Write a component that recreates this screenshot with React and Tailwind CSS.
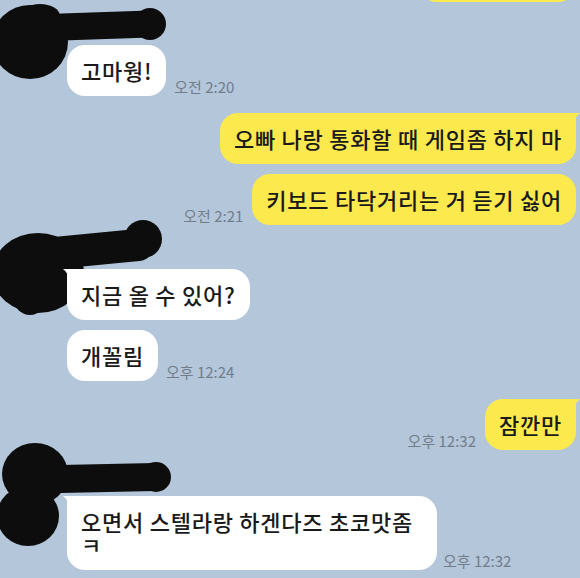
import React from 'react';

const YELLOW = '#fbe94e';

const Tail = ({ mine }) =>
  mine ? (
    <svg className="absolute right-[-4px] top-0" width="10" height="12" viewBox="0 0 10 12">
      <path d="M0 0 L10 0 Q5 3 4 12 L0 12 Z" fill={YELLOW} />
    </svg>
  ) : (
    <svg className="absolute left-[-4px] top-0" width="10" height="12" viewBox="0 0 10 12">
      <path d="M10 0 L0 0 Q5 3 6 12 L10 12 Z" fill="#ffffff" />
    </svg>
  );

const Bubble = ({ mine, tail, children, className = '' }) => (
  <div
    className={`relative rounded-[18px] px-[14px] py-[14px] text-[22px] font-medium leading-[23px] tracking-[0.75px] text-[#1a1a1a] ${
      mine ? 'bg-[#fbe94e]' : 'bg-white'
    } ${tail ? (mine ? 'rounded-tr-[6px]' : 'rounded-tl-[6px]') : ''} ${className}`}
  >
    {tail && <Tail mine={mine} />}
    {children}
  </div>
);

const Time = ({ children }) => (
  <span className="mb-[1px] shrink-0 text-[15px] leading-[16px] text-[#717d8a]">{children}</span>
);

const Received = ({ children, time, tail }) => (
  <div className="flex items-end gap-[8px] pl-[67px]">
    <Bubble tail={tail}>{children}</Bubble>
    {time && <Time>{time}</Time>}
  </div>
);

const Sent = ({ children, time, tail }) => (
  <div className="flex items-end justify-end gap-[9px] pr-[4px]">
    {time && <Time>{time}</Time>}
    <Bubble mine tail={tail}>{children}</Bubble>
  </div>
);

// black marker scribbles over the profile picture + name
const Scribble = ({ top, viewY, children }) => (
  <svg
    className="absolute left-0"
    style={{ top }}
    width="180"
    height="110"
    viewBox={`0 ${viewY} 180 110`}
  >
    <g fill="#0d0d0d" stroke="#0d0d0d" strokeLinecap="round">
      {children}
    </g>
  </svg>
);

export default function App() {
  return (
    <div className="relative h-[578px] w-[580px] overflow-hidden bg-[#b4c6da] font-['Noto_Sans_CJK_KR','Noto_Sans',sans-serif]">
      <div className="flex justify-end pr-[4px]">
        <div className="-mt-[48px] h-[50px] w-[157px] rounded-[18px] bg-[#fbe94e]" />
      </div>

      <div className="relative pt-[43px]">
        <Scribble top={-2} viewY={0}>
          <ellipse cx="30" cy="42" rx="38" ry="37" stroke="none" />
          <ellipse cx="40" cy="16" rx="20" ry="12" stroke="none" />
          <line x1="62" y1="27" x2="150" y2="24" strokeWidth="27" />
          <circle cx="150" cy="24" r="16" stroke="none" />
        </Scribble>
        <Received time="오전 2:20">고마웡!</Received>
      </div>

      <div className="mt-[17px] flex flex-col gap-[10px]">
        <Sent tail>오빠 나랑 통화할 때 게임좀 하지 마</Sent>
        <Sent time="오전 2:21">키보드 타닥거리는 거 듣기 싫어</Sent>
      </div>

      <div className="relative pt-[44px]">
        <Scribble top={-14} viewY={210}>
          <ellipse cx="38" cy="272" rx="46" ry="40" stroke="none" />
          <ellipse cx="30" cy="298" rx="16" ry="16" stroke="none" />
          <line x1="55" y1="252" x2="138" y2="244" strokeWidth="32" />
          <circle cx="143" cy="238" r="19" stroke="none" />
        </Scribble>
        <div className="flex flex-col gap-[10px]">
          <Received tail>지금 올 수 있어?</Received>
          <Received time="오후 12:24">개꼴림</Received>
        </div>
      </div>

      <div className="mt-[18px]">
        <Sent tail time="오후 12:32">잠깐만</Sent>
      </div>

      <div className="relative pt-[46px]">
        <Scribble top={-9} viewY={440}>
          <ellipse cx="35" cy="473" rx="33" ry="31" stroke="none" />
          <ellipse cx="28" cy="515" rx="31" ry="30" stroke="none" />
          <line x1="60" y1="478" x2="156" y2="476" strokeWidth="28" />
          <circle cx="156" cy="476" r="15" stroke="none" />
        </Scribble>
        <div className="flex items-end gap-[6px] pl-[67px]">
          <Bubble tail className="w-[370px]">
            오면서 스텔라랑 하겐다즈 초코맛좀 ㅋ
          </Bubble>
          <Time>오후 12:32</Time>
        </div>
      </div>
    </div>
  );
}
